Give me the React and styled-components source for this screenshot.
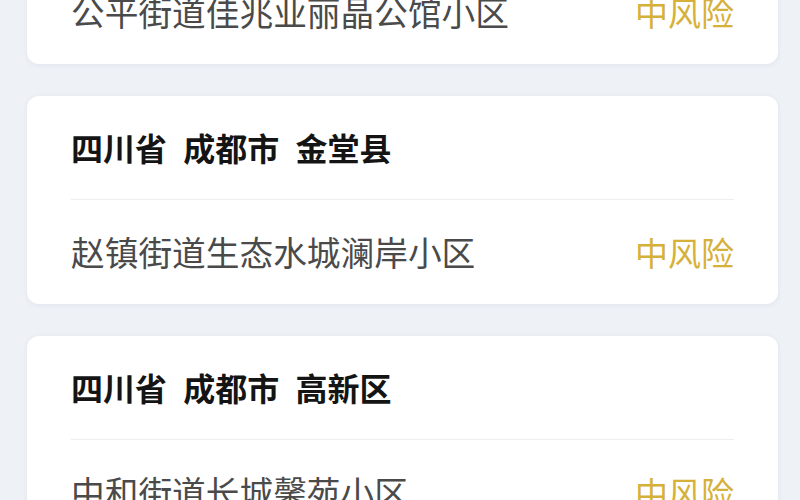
import React from "react";
import styled, { createGlobalStyle } from "styled-components";

const GlobalStyle = createGlobalStyle`
  html, body {
    margin: 0;
    padding: 0;
    background: #eef1f6;
    font-family: "Noto Sans CJK SC", "Noto Sans", sans-serif;
  }
`;

const areas = [
  {
    region: "四川省 成都市 温江区",
    places: [{ name: "公平街道佳兆业丽晶公馆小区", level: "中风险" }]
  },
  {
    region: "四川省 成都市 金堂县",
    places: [{ name: "赵镇街道生态水城澜岸小区", level: "中风险" }]
  },
  {
    region: "四川省 成都市 高新区",
    places: [{ name: "中和街道长城馨苑小区", level: "中风险" }]
  }
];

const Page = () => (
  <>
    <GlobalStyle />
    <Screen>
      <List>
        {areas.map(area => (
          <Card key={area.region}>
            <Region>{area.region}</Region>
            {area.places.map(place => (
              <Place key={place.name}>
                <PlaceName>{place.name}</PlaceName>
                <Level>{place.level}</Level>
              </Place>
            ))}
          </Card>
        ))}
      </List>
    </Screen>
  </>
);

export default Page;

const Screen = styled.div`
  width: 800px;
  height: 500px;
  overflow: hidden;
  background: #eef1f6;
`;

// list is scrolled, so the first card only shows its last row
const List = styled.div`
  display: flex;
  flex-direction: column;
  gap: 32px;
  padding: 0 22px 0 27px;
  margin-top: -144px;
`;

const Card = styled.div`
  background: #ffffff;
  border-radius: 12px;
  box-shadow: 0 1px 4px rgba(180, 190, 210, 0.25);
  padding: 0 44px;
`;

const Region = styled.div`
  font-size: 32px;
  font-weight: 700;
  color: #141414;
  line-height: 44px;
  word-spacing: 9px;
  padding: 29px 0 30px 0;
  border-bottom: 1px solid #eceef2;
`;

const Place = styled.div`
  display: flex;
  align-items: center;
  justify-content: space-between;
  line-height: 44px;
  padding: 30px 0;
`;

const PlaceName = styled.span`
  font-size: 33.7px;
  color: #4a4a4a;
`;

const Level = styled.span`
  font-size: 33px;
  color: #d6b13a;
`;
